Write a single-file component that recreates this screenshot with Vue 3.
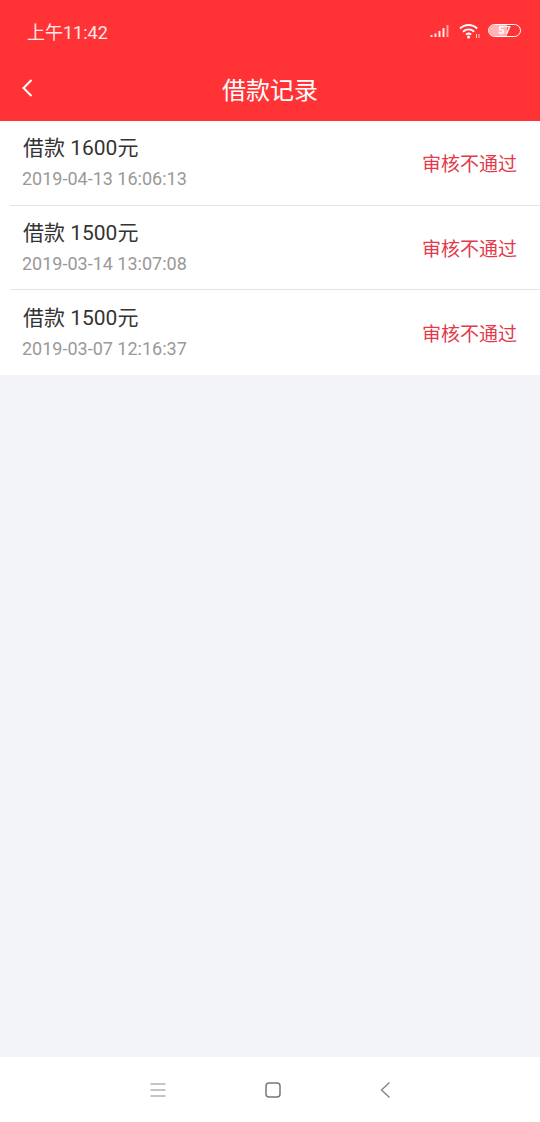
<script setup>
const rows = [
  { amount: '借款 1600元', time: '2019-04-13 16:06:13', status: '审核不通过', line: true },
  { amount: '借款 1500元', time: '2019-03-14 13:07:08', status: '审核不通过', line: true },
  { amount: '借款 1500元', time: '2019-03-07 12:16:37', status: '审核不通过', line: false },
]
</script>

<template>
  <div class="page">
    <header class="head">
      <div class="status">
        <span class="clock">上午11:42</span>
        <div class="indicators">
          <svg class="signal" width="21" height="14" viewBox="0 0 21 14">
            <rect x="0.5" y="11" width="2" height="2" fill="#fff" opacity=".9" />
            <rect x="4.5" y="9.5" width="2" height="3.5" fill="#fff" opacity=".9" />
            <rect x="8.5" y="7" width="2" height="6" fill="#fff" opacity=".9" />
            <rect x="12.5" y="4" width="2" height="9" fill="#fff" opacity=".9" />
            <rect x="16.5" y="1" width="2" height="12" fill="#fff" opacity=".55" />
          </svg>
          <svg class="wifi" width="22" height="16" viewBox="0 0 22 16">
            <path d="M1 5.5C6 .8 13.2.8 18.2 5.5" fill="none" stroke="#fff" stroke-width="1.9" />
            <path d="M4 8.8c3.400-3 7.900-3 11.200 0" fill="none" stroke="#fff" stroke-width="1.900" />
            <path d="M7 11.600c1.800-1.400 3.600-1.400 5.200 0" fill="none" stroke="#fff" stroke-width="1.800" />
            <circle cx="9.600" cy="14" r="1.500" fill="#fff" />
            <path d="M17.500 11v4M20 11v4" stroke="#fff" stroke-width="1" opacity=".8" />
          </svg>
          <div class="battery">
            <div class="level"></div>
            <span class="pct">57</span>
          </div>
        </div>
      </div>
      <div class="bar">
        <svg class="back" width="12" height="20" viewBox="0 0 12 20">
          <path d="M10.500 2 2.500 10l8 8" fill="none" stroke="#fff" stroke-width="2" />
        </svg>
        <h1 class="title">借款记录</h1>
      </div>
    </header>

    <main class="list">
      <div v-for="(r, i) in rows" :key="i" class="row" :class="{ ruled: r.line }">
        <div class="info">
          <div class="amount">{{ r.amount }}</div>
          <div class="time">{{ r.time }}</div>
        </div>
        <div class="state">{{ r.status }}</div>
      </div>
    </main>

    <div class="fill"></div>

    <nav class="nav">
      <svg width="18" height="16" viewBox="0 0 18 16">
        <path d="M1.500 2h15M1.500 8h15M1.500 14h15" stroke="#8c8c8c" stroke-width="1.200" fill="none" />
      </svg>
      <svg width="18" height="18" viewBox="0 0 18 18">
        <rect x="2" y="2" width="14" height="14" rx="3" stroke="#777" stroke-width="1.500" fill="none" />
      </svg>
      <svg width="12" height="18" viewBox="0 0 12 18">
        <path d="M10.500 1.500 2.500 9l8 7.500" stroke="#808080" stroke-width="1.300" fill="none" />
      </svg>
    </nav>
  </div>
</template>

<style>
html, body { margin: 0; padding: 0; }
</style>

<style scoped>
.page {
  width: 540px;
  height: 1122px;
  display: flex;
  flex-direction: column;
  background: #f2f4f8;
  font-family: Roboto, "Noto Sans CJK SC", sans-serif;
  overflow: hidden;
}
.head { background: #ff3336; height: 121px; flex: none; color: #fff; }
.status {
  height: 61px;
  padding: 0 19px 0 27px;
  display: flex;
  align-items: center;
  justify-content: space-between;
}
.clock { font-size: 18px; color: #fdeaea; }
.indicators { display: flex; align-items: center; gap: 7px; }
.signal { margin-right: 1px; }
.battery {
  position: relative;
  width: 31px;
  height: 11px;
  border: 1.500px solid #fff;
  border-radius: 7px;
  overflow: hidden;
  display: flex;
  align-items: center;
  justify-content: center;
}
.level { position: absolute; left: 0; top: 0; bottom: 0; width: 57%; background: #ffb5b5; }
.pct { position: relative; font-size: 11px; font-weight: 700; color: #fff; line-height: 11px; }
.bar {
  position: relative;
  height: 54px;
  display: flex;
  align-items: center;
  justify-content: center;
}
.back { position: absolute; left: 21px; top: 17px; }
.title { margin: 0; font-size: 24px; font-weight: 400; color: #fff; }
.list { background: #fff; flex: none; }
.row {
  box-sizing: border-box;
  height: 84.500px;
  margin-left: 10px;
  padding: 0 23px 0 13px;
  display: flex;
  align-items: center;
  justify-content: space-between;
}
.ruled { border-bottom: 1px solid #e4e4e4; }
.info { display: flex; flex-direction: column; gap: 5px; }
.amount { font-size: 21px; line-height: 28px; color: #333; }
.time { font-size: 18px; line-height: 24px; color: #999; margin-left: -1px; }
.state { font-size: 19px; color: #e4394b; }
.fill { flex: 1; }
.nav {
  height: 65px;
  flex: none;
  background: #fff;
  box-sizing: border-box;
  padding: 0 149px 0 149px;
  display: flex;
  align-items: center;
  justify-content: space-between;
}
</style>
